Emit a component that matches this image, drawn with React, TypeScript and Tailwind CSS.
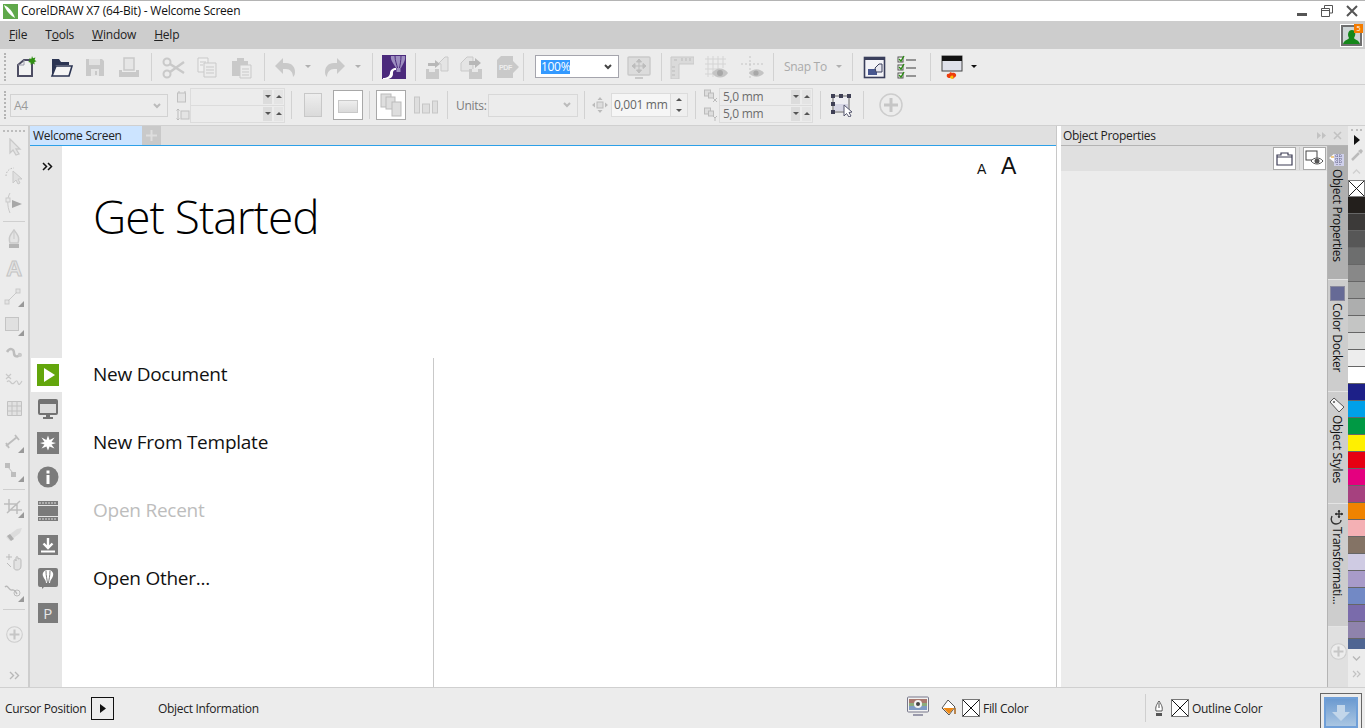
import type { ReactNode } from 'react';

const G = '#c9c9c9';
const D = '#4d4d63';

function Ico({ w = 24, h = 24, children }: { w?: number; h?: number; children: ReactNode }) {
  return (
    <svg width={w} height={h} viewBox={`0 0 ${w} ${h}`} fill="none" className="block shrink-0">
      {children}
    </svg>
  );
}

function Sep({ className }: { className: string }) {
  return <div className={`w-px h-[28px] shrink-0 bg-[#d2d2d2] ${className}`} />;
}

function Grip() {
  return <div className="ml-[4px] w-[3px] h-[28px] shrink-0 border-l-2 border-dotted border-[#b4b4b4]" />;
}

function Slot({ className, children }: { className: string; children?: ReactNode }) {
  return <div className={`flex items-center justify-center shrink-0 ${className}`}>{children}</div>;
}

function Caret({ color = '#b0b0b0' }: { color?: string }) {
  return <div className="w-0 h-0 border-x-[3.5px] border-x-transparent border-t-[3.5px]" style={{ borderTopColor: color }} />;
}

function Spin({ text, w }: { text?: string; w: string }) {
  return (
    <div className={`flex items-center h-[16px] ${w}`}>
      <span className="flex-1 pl-[3px] text-[12px] text-[#6d6d6d] leading-none">{text}</span>
      <span className="w-[9px] h-[14px] mr-[2px] bg-[#dcdcdc] flex items-center justify-center"><Caret color="#555" /></span>
      <span className="w-[9px] h-[14px] mr-[1px] bg-[#e4e4e4] flex items-center justify-center"><div className="w-0 h-0 border-x-[3.5px] border-x-transparent border-b-[3.5px] border-b-[#555]" /></span>
    </div>
  );
}

function Cross({ className }: { className: string }) {
  return (
    <div className={`shrink-0 ${className}`}>
      <svg viewBox="0 0 18 18" className="block w-full h-full">
        <rect x="0.5" y="0.5" width="17" height="17" fill="#fff" stroke="#777" />
        <path d="M1 1 17 17M17 1 1 17" stroke="#111" strokeWidth="1" />
      </svg>
    </div>
  );
}

function Toolbar1() {
  return (
    <div className="flex items-center h-[36px] bg-[#ececec] border-b border-[#d0d0d0]">
      <Grip />
      <Slot className="w-[36px]">
        <Ico>
          <path d="M5 10 11 5H19V21H5Z" fill="#f2f2f2" stroke={D} strokeWidth="2" />
          <path d="M5 10H11V5" stroke="#9a9aa8" />
          <path d="M19 1l1 2.2 2.4-.6-.8 2.3 2 1.4-2.3.8.4 2.4-2.2-1.2-1.7 1.7-.3-2.4-2.4-.5 1.9-1.5-1-2.2 2.4.4Z" fill="#2f8f12" />
        </Ico>
      </Slot>
      <Slot className="ml-[1px] w-[34px]">
        <Ico>
          <path d="M3 21V4H10L12 7H20V10H7L3 21Z" fill="#2c3553" />
          <path d="M3 21 7 11H23L20 21Z" fill="#f5f5f5" stroke="#2c3553" strokeWidth="1.6" />
        </Ico>
      </Slot>
      <Slot className="w-[34px]">
        <Ico>
          <path d="M3 4H19L21 6V21H3Z" fill={G} />
          <rect x="6" y="4" width="11" height="6" fill="#e2e2e2" />
          <rect x="8" y="14" width="8" height="7" fill="#e6e6e6" />
          <rect x="12" y="16" width="2" height="4" fill={G} />
        </Ico>
      </Slot>
      <Slot className="w-[34px]">
        <Ico>
          <rect x="7" y="3" width="10" height="12" fill="#e6e6e6" stroke={G} strokeWidth="1.5" />
          <path d="M2 15H5V17H19V15H22V22H2Z" fill={G} />
        </Ico>
      </Slot>
      <Sep className="ml-[5px]" />
      <Slot className="ml-[4px] w-[34px]">
        <Ico>
          <circle cx="6" cy="7" r="3.5" stroke={G} strokeWidth="2" />
          <circle cx="6" cy="19" r="3.5" stroke={G} strokeWidth="2" />
          <path d="M9 9 23 18M9 17 23 7" stroke={G} strokeWidth="2.4" />
        </Ico>
      </Slot>
      <Slot className="w-[34px]">
        <Ico>
          <path d="M3 3H13V17H3Z" fill="#f0f0f0" stroke={G} />
          <path d="M9 8H21V22H9Z" fill="#ececec" stroke={G} />
          <path d="M5 7H11M5 10H8M11 12H19M11 15H19M11 18H19" stroke={G} />
        </Ico>
      </Slot>
      <Slot className="w-[34px]">
        <Ico>
          <path d="M3 6H8V3H15V6H19V21H3Z" fill={G} />
          <path d="M11 10H22V23H11Z" fill="#ececec" stroke={G} />
          <path d="M13 14H20M13 17H20M13 20H20" stroke={G} />
        </Ico>
      </Slot>
      <Sep className="ml-[6px]" />
      <Slot className="ml-[5px] w-[30px]">
        <Ico>
          <path d="M2 11 10 3V8H13C19 8 22 12 22 17 22 20 21 21 20 22 20 17 17 14 13 14H10V19Z" fill={G} />
        </Ico>
      </Slot>
      <Slot className="w-[16px]"><Caret /></Slot>
      <Slot className="ml-[4px] w-[30px]">
        <Ico>
          <path d="M22 11 14 3V8H11C5 8 2 12 2 17 2 20 3 21 4 22 4 17 7 14 11 14H14V19Z" fill={G} />
        </Ico>
      </Slot>
      <Slot className="w-[16px]"><Caret /></Slot>
      <Sep className="ml-[6px]" />
      <Slot className="ml-[9px] w-[24px]">
        <Ico>
          <rect width="24" height="24" fill="#4b2a7c" />
          <path d="M9 1H23C24 5 21 9 19 13H14C12 9 8 5 9 1Z" fill="#9d8ec0" />
          <path d="M13 1C13 6 15 10 15.5 13M19 1C19 6 18 10 17.5 13" stroke="#4b2a7c" />
          <path d="M14.5 13H18.5V17H14.5Z" fill="#9d8ec0" />
          <path d="M1 23C5 23 8 21 8 18 8 15 11 13 14 13L14 15C11 15 11 17 11 19 11 22 8 24 5 24H1Z" fill="#fff" />
        </Ico>
      </Slot>
      <Sep className="ml-[9px]" />
      <Slot className="w-[42px]">
        <Ico>
          <path d="M1 14H14V24H1Z" fill={G} />
          <path d="M4 14H10V17H4Z" fill="#e8e8e8" />
          <path d="M3 8H10V5L15 9 10 13V11H3Z" fill="#b8b8b8" />
          <path d="M14 8 20 2H23V16H16V9Z" fill="#e4e4e4" stroke={G} />
        </Ico>
      </Slot>
      <Slot className="w-[26px]">
        <Ico>
          <path d="M2 8 8 2H14V16H2Z" fill="#e4e4e4" stroke={G} />
          <path d="M10 6H16V3L22 8 16 13V10H10Z" fill="#b8b8b8" />
          <path d="M10 14H23V24H10Z" fill={G} />
          <path d="M13 14H19V17H13Z" fill="#e8e8e8" />
        </Ico>
      </Slot>
      <Slot className="ml-[10px] w-[26px]">
        <Ico>
          <path d="M2 5 6 1H18V6L24 12 18 18V23H2Z" fill={G} />
          <text x="4" y="15" fontSize="7" fontWeight="700" fill="#eee" fontFamily="Liberation Sans, sans-serif">PDF</text>
        </Ico>
      </Slot>
      <Sep className="ml-[3px]" />
      <div className="ml-[11px] w-[84px] h-[23px] shrink-0 bg-white border border-[#a5a5ad] flex items-center pl-[5px]">
        <span className="bg-[#3399ff] text-white text-[12px] leading-[14px]">100%</span>
        <svg width="8" height="6" viewBox="0 0 8 6" className="ml-auto mr-[6px]"><path d="M1 1 4 4 7 1" stroke="#444" strokeWidth="2" fill="none" /></svg>
      </div>
      <Slot className="ml-[5px] w-[30px]">
        <Ico>
          <rect x="1" y="2" width="22" height="18" rx="1" fill="#dcdcdc" stroke={G} strokeWidth="1.4" />
          <path d="M12 5v12M6 11h12M12 4l-2.5 3h5ZM12 18l-2.5-3h5ZM5 11l3-2.5v5ZM19 11l-3-2.5v5Z" stroke="#bdbdbd" fill="#bdbdbd" />
          <path d="M8 23H16" stroke={G} strokeWidth="2" />
        </Ico>
      </Slot>
      <Sep className="ml-[7px]" />
      <Slot className="ml-[5px] w-[30px]">
        <Ico>
          <path d="M1 2H24V9H9V24H1Z" fill="#dadada" stroke={G} />
          <path d="M4 5H7M12 3V6M16 3V6M20 3V6M2 12H5M2 16H5M2 20H5" stroke="#bbb" />
        </Ico>
      </Slot>
      <Slot className="ml-[4px] w-[30px]">
        <Ico>
          <path d="M1 4H22M1 9H22M1 14H16M1 19H10M4 1V22M9 1V22M14 1V17M19 1V13" stroke="#d4d4d4" />
          <path d="M8 18C12 12 20 12 24 18 20 24 12 24 8 18Z" fill="#c4c4c4" />
          <circle cx="16" cy="18" r="3" fill="#a8a8a8" />
        </Ico>
      </Slot>
      <Slot className="ml-[6px] w-[30px]">
        <Ico>
          <path d="M1 9H24M10 1V24" stroke="#c4c4c4" strokeDasharray="2 2" />
          <path d="M9 18C13 13 20 13 24 18 20 23 13 23 9 18Z" fill="#c4c4c4" />
          <circle cx="16" cy="18" r="2.6" fill="#a8a8a8" />
        </Ico>
      </Slot>
      <Sep className="ml-[6px]" />
      <span className="ml-[10px] w-[44px] shrink-0 text-[12px] text-[#aaa] whitespace-nowrap">Snap To</span>
      <Slot className="ml-[5px] w-[12px]"><Caret /></Slot>
      <Sep className="ml-[7px]" />
      <Slot className="ml-[10px] w-[24px]">
        <Ico>
          <rect x="1.5" y="2.5" width="20" height="20" fill="#f4f4f8" stroke="#3a3f5c" strokeWidth="1.6" />
          <path d="M2 2H22V5H2Z" fill="#3a3f5c" />
          <path d="M5 14H14V20H5Z" fill="#48578f" />
          <path d="M12 13 16 9H19V17H13Z" fill="#e8e8f0" stroke="#3a3f5c" />
        </Ico>
      </Slot>
      <Slot className="ml-[8px] w-[24px]">
        <Ico>
          <rect x="3" y="2" width="5" height="5" fill="#fff" stroke="#555" />
          <rect x="3" y="10" width="5" height="5" fill="#fff" stroke="#555" />
          <rect x="3" y="18" width="5" height="5" fill="#fff" stroke="#555" />
          <path d="M4 4 6 6 9 1M4 12 6 14 9 9M4 20 6 22 9 17" stroke="#2b8a12" strokeWidth="1.4" />
          <path d="M11 5H21M11 13H21M11 21H21" stroke="#777" strokeWidth="1.5" />
        </Ico>
      </Slot>
      <Sep className="ml-[11px]" />
      <Slot className="ml-[9px] w-[24px]">
        <Ico>
          <rect x="2" y="1" width="20" height="15" fill="#dfe1ea" stroke="#444" />
          <rect x="2" y="1" width="20" height="5" fill="#111" />
          <path d="M7 22C6 19 8 18 9 19 10 17 11 17 12 18 14 17 17 19 16 21 15 23 14 22 13 24 12 22 9 24 7 22Z" fill="#ee3d0c" />
          <path d="M10 23C10 21 12 20 13 21 14 22 13 24 12 24Z" fill="#f9c30c" />
        </Ico>
      </Slot>
      <Slot className="ml-[5px] w-[10px]"><Caret color="#111" /></Slot>
    </div>
  );
}

function PlusCircle({ size }: { size: number }) {
  return (
    <svg width={size} height={size} viewBox="0 0 24 24" fill="none" className="block">
      <circle cx="12" cy="12" r="11" stroke="#cdcdcd" strokeWidth="1.5" fill="#ececec" />
      <path d="M12 5V19M5 12H19" stroke="#c6c6c6" strokeWidth="3" />
    </svg>
  );
}

function Toolbar2() {
  return (
    <div className="flex items-center h-[41px] bg-[#ececec] border-b border-[#d0d0d0]">
      <Grip />
      <div className="ml-[3px] w-[158px] h-[23px] shrink-0 bg-[#ececec] border border-[#d2d2d2] flex items-center pl-[3px] pt-[2px] text-[12px] text-[#9a9a9a]">
        A4
        <svg width="8" height="6" viewBox="0 0 8 6" className="ml-auto mr-[6px]"><path d="M1 1 4 4 7 1" stroke="#bbb" strokeWidth="2" fill="none" /></svg>
      </div>
      <div className="ml-[8px] w-[14px] shrink-0 flex flex-col gap-[5px]">
        <Ico w={12} h={13}>
          <path d="M3 1V3M9 1V3" stroke="#bbb" />
          <rect x="1.5" y="3" width="8" height="9" fill="#e4e4e4" stroke="#c0c0c0" />
        </Ico>
        <Ico w={14} h={13}>
          <path d="M2 1V12M0.5 2.5 2 1 3.5 2.5M0.5 10.5 2 12 3.5 10.5" stroke="#bbb" />
          <rect x="5" y="3" width="8" height="8" fill="#e4e4e4" stroke="#c0c0c0" />
        </Ico>
      </div>
      <div className="w-[95px] shrink-0 border border-[#dcdcdc] flex flex-col">
        <div className="border-b border-[#dcdcdc]"><Spin w="w-full" /></div>
        <Spin w="w-full" />
      </div>
      <Sep className="ml-[6px]" />
      <div className="ml-[12px] w-[18px] h-[24px] shrink-0 border border-[#c8c8c8] bg-gradient-to-b from-[#eeeeee] to-[#dadada]" />
      <div className="ml-[11px] w-[30px] h-[30px] shrink-0 bg-white border border-[#a8a8a8] flex items-center justify-center">
        <div className="w-[20px] h-[13px] mt-[3px] border border-[#c8c8c8] bg-gradient-to-b from-[#eeeeee] to-[#dadada]" />
      </div>
      <Sep className="ml-[6px]" />
      <div className="ml-[6px] w-[30px] h-[30px] shrink-0 bg-white border border-[#a8a8a8] flex items-center justify-center">
        <Ico>
          <rect x="2" y="1" width="10" height="13" fill="#dedede" stroke="#bbb" />
          <rect x="7" y="4" width="9" height="12" fill="#dedede" stroke="#bbb" />
          <rect x="13" y="9" width="9" height="14" fill="#dedede" stroke="#bbb" />
        </Ico>
      </div>
      <Slot className="ml-[7px] w-[26px]">
        <Ico w={26} h={18}>
          <rect x="1.5" y="1" width="5" height="16" fill="#dedede" stroke="#c6c6c6" />
          <rect x="9.5" y="8" width="7" height="9" fill="#dedede" stroke="#c6c6c6" />
          <rect x="19.5" y="5" width="5" height="12" fill="#dedede" stroke="#c6c6c6" />
        </Ico>
      </Slot>
      <Sep className="ml-[8px]" />
      <span className="ml-[8px] pt-[2px] w-[32px] shrink-0 text-[12px] text-[#7c7c7c]">Units:</span>
      <div className="w-[90px] h-[23px] shrink-0 border border-[#d8d8d8] flex items-center justify-end pr-[6px]">
        <svg width="8" height="6" viewBox="0 0 8 6"><path d="M1 1 4 4 7 1" stroke="#bbb" strokeWidth="2" fill="none" /></svg>
      </div>
      <Sep className="ml-[6px]" />
      <Slot className="ml-[7px] w-[16px]">
        <Ico w={16} h={16}>
          <rect x="5" y="5" width="6" height="6" fill="#ddd" stroke="#bbb" />
          <path d="M8 0 5.5 3H10.5ZM8 16 5.5 13H10.5ZM0 8 3 5.5V10.5ZM16 8 13 5.5V10.5Z" fill="#bbb" />
        </Ico>
      </Slot>
      <div className="ml-[3px] w-[77px] h-[24px] shrink-0 bg-[#f6f6f6] border border-[#dcdcdc] flex items-center">
        <span className="flex-1 pl-[2px] text-[12px] text-[#666] whitespace-nowrap">0,001 mm</span>
        <div className="w-[17px] h-full bg-[#efefef] border-l border-[#dcdcdc] flex flex-col items-center justify-around">
          <div className="w-0 h-0 border-x-[3.5px] border-x-transparent border-b-[3.5px] border-b-[#555]" />
          <Caret color="#555" />
        </div>
      </div>
      <Sep className="ml-[7px]" />
      <div className="ml-[8px] w-[14px] shrink-0 flex flex-col gap-[4px]">
        <Ico w={14} h={14}>
          <rect x="0.5" y="1" width="6" height="6" fill="#ddd" stroke="#bbb" />
          <rect x="4.5" y="4" width="5" height="5" fill="#ddd" stroke="#bbb" />
          <path d="M9 9 13 13M13 9 9 13" stroke="#bbb" />
        </Ico>
        <Ico w={14} h={14}>
          <rect x="0.5" y="1" width="6" height="6" fill="#ddd" stroke="#bbb" />
          <rect x="4.5" y="4" width="5" height="5" fill="#ddd" stroke="#bbb" />
          <path d="M9 9 11 11 13 9M11 11V14" stroke="#bbb" />
        </Ico>
      </div>
      <div className="ml-[1px] w-[94px] shrink-0 border border-[#dcdcdc] flex flex-col">
        <div className="border-b border-[#dcdcdc]"><Spin w="w-full" text="5,0 mm" /></div>
        <Spin w="w-full" text="5,0 mm" />
      </div>
      <Sep className="ml-[7px]" />
      <Slot className="ml-[9px] w-[24px]">
        <Ico>
          <rect x="3" y="3" width="16" height="16" fill="#eeeef2" stroke="#666" />
          <rect x="4" y="11" width="14" height="7" fill="#d6d6e4" />
          <path d="M1 1h4v4H1ZM17 1h4v4h-4ZM1 17h4v4H1ZM9 1h4v4H9ZM1 9h4v4H1Z" fill="#3f4055" />
          <path d="M14 12V23L16.5 20.5 19 24 21 23 19 19.5 22 19Z" fill="#fff" stroke="#54566e" />
        </Ico>
      </Slot>
      <Sep className="ml-[9px]" />
      <Slot className="ml-[15px] w-[24px]">
        <PlusCircle size={24} />
      </Slot>
    </div>
  );
}

function ToolSlot({ h, children }: { h: string; children: ReactNode }) {
  return <div className={`flex items-center justify-center shrink-0 ${h}`}>{children}</div>;
}

function ToolSep({ className }: { className: string }) {
  return <div className={`w-[22px] h-px mx-auto shrink-0 bg-[#cfcfcf] ${className}`} />;
}

function Toolbox() {
  return (
    <div className="w-[30px] shrink-0 bg-[#ececec] border-r-2 border-[#cdcdcd] flex flex-col">
      <div className="mt-[4px] mx-[3px] h-[2px] shrink-0 border-t-2 border-dotted border-[#bdbdbd]" />
      <div className="mt-[1px]" />
      <ToolSlot h="h-[28px]">
        <Ico w={18} h={18}><path d="M5 1V15L8 12 11 17 14 16 11 11H15Z" fill="#e4e4e4" stroke={G} strokeWidth="1.3" /></Ico>
      </ToolSlot>
      <ToolSlot h="h-[28px]">
        <Ico w={20} h={20}>
          <path d="M2 11C2 6 6 3 10 3" stroke="#bdbdbd" strokeDasharray="1.5 1.5" />
          <path d="M9 6V18L12 15 14 19 16 18 14 14H18Z" fill="#e0e0e0" stroke={G} />
        </Ico>
      </ToolSlot>
      <ToolSlot h="h-[28px]">
        <Ico w={20} h={22}>
          <path d="M6 1C3 6 3 14 6 21" stroke={G} />
          <rect x="2" y="6" width="4" height="4" fill="#e8e8e8" stroke={G} />
          <path d="M8 8 18 12 8 16Z" fill="#a8a8a8" />
        </Ico>
      </ToolSlot>
      <ToolSep className="mt-[4px]" />
      <ToolSlot h="h-[34px]">
        <Ico w={18} h={20}>
          <path d="M9 1C12 5 15 8 13 14H5C3 8 6 5 9 1Z" fill="#e4e4e4" stroke={G} strokeWidth="1.5" />
          <path d="M9 3V10" stroke={G} />
          <rect x="4" y="15" width="10" height="4" fill="#b4b4b4" />
        </Ico>
      </ToolSlot>
      <ToolSlot h="h-[25px]">
        <span className="text-[22px] font-bold text-[#e4e4e4] leading-none [-webkit-text-stroke:1px_#c4c4c4] font-['Liberation_Sans',sans-serif]">A</span>
      </ToolSlot>
      <ToolSlot h="h-[31px]">
        <Ico w={20} h={20}>
          <rect x="1" y="13" width="4" height="4" fill="#e4e4e4" stroke={G} />
          <rect x="12" y="2" width="4" height="4" fill="#e4e4e4" stroke={G} />
          <path d="M4 14 13 5" stroke={G} />
          <path d="M20 14V20H14Z" fill="#999" />
        </Ico>
      </ToolSlot>
      <ToolSlot h="h-[27px]">
        <Ico w={20} h={20}>
          <rect x="1.5" y="1.5" width="13" height="13" fill="#e0e0e0" stroke="#c4c4c4" />
          <path d="M20 14V20H14Z" fill="#999" />
        </Ico>
      </ToolSlot>
      <ToolSlot h="h-[27px]">
        <Ico w={18} h={14}><path d="M2 6C5 1 9 3 9 7 9 11 14 12 15 7" stroke="#bdbdbd" strokeWidth="2.5" /><circle cx="15" cy="9" r="2" fill={G} /></Ico>
      </ToolSlot>
      <ToolSlot h="h-[27px]">
        <Ico w={18} h={16}><path d="M1 2 6 7M6 2 1 7M2 10C5 6 6 14 9 11S12 8 13 11 15 12 17 9" stroke={G} strokeWidth="1.2" /></Ico>
      </ToolSlot>
      <ToolSlot h="h-[30px]">
        <Ico w={15} h={15}><path d="M.5.5H14.5V14.5H.5ZM5 .5V14.5M10 .5V14.5M.5 5H14.5M.5 10H14.5" fill="#e2e2e2" stroke="#c2c2c2" /></Ico>
      </ToolSlot>
      <div className="mt-[5px]" />
      <ToolSlot h="h-[30px]">
        <Ico w={20} h={20}>
          <path d="M2 13 13 4M2 10 5 15M11 2 15 7" stroke="#bdbdbd" strokeWidth="1.8" />
          <path d="M20 14V20H14Z" fill="#999" />
        </Ico>
      </ToolSlot>
      <ToolSlot h="h-[28px]">
        <Ico w={20} h={20}>
          <rect x="1" y="1" width="5" height="5" fill="#bdbdbd" />
          <rect x="7" y="10" width="5" height="5" fill="#bdbdbd" />
          <path d="M4 5 9 11" stroke="#bdbdbd" />
          <path d="M20 14V20H14Z" fill="#999" />
        </Ico>
      </ToolSlot>
      <ToolSep className="mt-[3px]" />
      <ToolSlot h="h-[36px]">
        <Ico w={20} h={20}>
          <path d="M0 6H13V16M5 1V12H18M3 15 16 3" stroke="#bdbdbd" strokeWidth="1.5" />
          <path d="M20 14V20H14Z" fill="#999" />
        </Ico>
      </ToolSlot>
      <ToolSlot h="h-[18px]">
        <Ico w={18} h={16}><path d="M1 10 12 2 17 1 15 6 5 14Z" fill="#dcdcdc" /><path d="M2 9 6 14 9 12 5 7Z" fill="#b0b0b0" /></Ico>
      </ToolSlot>
      <ToolSlot h="h-[36px]">
        <Ico w={18} h={18}><path d="M9 15V8C9 6 11 6 11 8V5C11 3 13 3 13 5V6C15 5 16 6 16 7V13C16 16 14 17 12 17 10 17 9 16 9 15Z" fill="#e2e2e2" stroke="#bbb" /><path d="M1 4H7M4 1V7M2 10 6 14" stroke="#bbb" /></Ico>
      </ToolSlot>
      <ToolSlot h="h-[24px]">
        <Ico w={20} h={20}>
          <path d="M1 5C4 2 5 9 8 8S11 9 13 12" stroke="#b8b8b8" strokeWidth="1.4" />
          <circle cx="13" cy="11" r="3" stroke="#bbb" />
          <path d="M20 14V20H14Z" fill="#999" />
        </Ico>
      </ToolSlot>
      <ToolSep className="mt-[5px]" />
      <ToolSlot h="h-[48px]"><PlusCircle size={17} /></ToolSlot>
      <ToolSlot h="h-[34px]">
        <svg width="11" height="9" viewBox="0 0 11 9" fill="none"><path d="M1 1 4.5 4.5 1 8M6 1 9.5 4.5 6 8" stroke="#b8b8b8" strokeWidth="1.4" /></svg>
      </ToolSlot>
    </div>
  );
}

function WelcomeRail() {
  const cell = 'h-[34px] pl-[3px] flex items-center justify-center shrink-0';
  return (
    <div className="w-[32px] shrink-0 bg-[#e6e6e6] flex flex-col">
      <div className="h-[40px] pl-[2px] flex items-center justify-center shrink-0">
        <svg width="11" height="9" viewBox="0 0 11 9" fill="none"><path d="M1 1 4.5 4.5 1 8M6 1 9.5 4.5 6 8" stroke="#111" strokeWidth="1.5" /></svg>
      </div>
      <div className="h-[172px] shrink-0" />
      <div className={`${cell} bg-white ml-[1px]`}>
        <svg width="22" height="22" viewBox="0 0 22 22" className="block"><rect width="22" height="22" fill="#63a60c" /><path d="M7 4V18L18 11Z" fill="#fff" /></svg>
      </div>
      <div className={cell}>
        <svg width="20" height="21" viewBox="0 0 20 21" fill="none" className="block">
          <rect x="1" y="1" width="18" height="14" rx="1" fill="#dcdcdc" stroke="#727272" strokeWidth="2" />
          <rect x="1" y="1" width="18" height="4" fill="#727272" />
          <path d="M8 15H12V18H8ZM5 18H15V20H5Z" fill="#727272" />
        </svg>
      </div>
      <div className={cell}>
        <svg width="22" height="22" viewBox="0 0 22 22" className="block"><rect width="22" height="22" fill="#7b7b7b" /><path d="M11 3.5 12.6 8 17.5 5.5 14.5 10 19 11 14.5 12.5 17.5 16.500 12.600 14.500 11 18.500 9.400 14.500 4.500 16.500 7.500 12.500 3 11 7.500 10 4.500 5.500 9.400 8Z" fill="#fff" /></svg>
      </div>
      <div className={cell}>
        <svg width="22" height="22" viewBox="0 0 22 22" className="block"><circle cx="11" cy="11" r="10.5" fill="#7b7b7b" /><rect x="9.5" y="4.5" width="3" height="3" fill="#fff" /><rect x="9.5" y="9" width="3" height="9" fill="#fff" /></svg>
      </div>
      <div className={cell}>
        <svg width="20" height="20" viewBox="0 0 20 20" className="block">
          <rect width="20" height="20" fill="#7b7b7b" />
          <path d="M1 2H19M1 18H19" stroke="#ddd" strokeDasharray="2 1" strokeWidth="1.2" />
          <path d="M0 4.5H20M0 15.5H20" stroke="#e6e6e6" />
        </svg>
      </div>
      <div className={cell}>
        <svg width="20" height="20" viewBox="0 0 20 20" className="block"><rect width="20" height="20" fill="#7b7b7b" /><path d="M10 3V12M5.5 8.5 10 13 14.5 8.5" stroke="#fff" strokeWidth="2.4" fill="none" /><path d="M3 16.5H17" stroke="#fff" strokeWidth="2" /></svg>
      </div>
      <div className={cell}>
        <svg width="20" height="22" viewBox="0 0 20 22" className="block">
          <path d="M2 0H18A2 2 0 0 1 20 2V17A2 2 0 0 1 18 19H6L4 21V19H2A2 2 0 0 1 0 17V2A2 2 0 0 1 2 0Z" fill="#7b7b7b" />
          <path d="M10 2C14 2 16 5 15 8 14 11 12 12 12 15H8C8 12 6 11 5 8 4 5 6 2 10 2Z" fill="#fff" />
          <path d="M8 3C8 8 9 11 9.5 15M12 3C12 8 11 11 10.5 15" stroke="#7b7b7b" fill="none" />
        </svg>
      </div>
      <div className={cell}>
        <div className="w-[20px] h-[20px] bg-[#7b7b7b] text-[#e6e6e6] text-[15px] leading-[20px] text-center">P</div>
      </div>
    </div>
  );
}

function WelcomePage() {
  return (
    <div className="flex-1 bg-white relative flex flex-col min-w-0">
      <div className="absolute top-[7px] right-[40px] flex items-baseline gap-[15px] text-[#111] font-['Liberation_Sans',sans-serif]">
        <span className="text-[14px] font-medium">A</span>
        <span className="text-[23px] leading-[27px]">A</span>
      </div>
      <h1 className="ml-[31px] mt-[35px] h-[177px] shrink-0 text-[46px] leading-[70px] font-light text-black whitespace-nowrap tracking-[-1px]">Get Started</h1>
      <div className="flex flex-1">
        <div className="w-[372px] h-full border-r border-[#c9c9c9] pl-[31px] flex flex-col gap-[40px] pt-[2px] text-[19px] leading-[28px] tracking-[-0.25px] text-[#111] shrink-0">
          <div className="h-[28px]">New Document</div>
          <div className="h-[28px]">New From Template</div>
          <div className="h-[28px] text-[#bdbdbd]">Open Recent</div>
          <div className="h-[28px]">Open Other...</div>
        </div>
      </div>
    </div>
  );
}

function DocTabs() {
  return (
    <div className="flex-1 flex flex-col min-w-0 border-r border-[#c8c8c8]">
      <div className="h-[20px] shrink-0 bg-[#e0e0e0] border-b border-[#2da0e8] flex">
        <div className="w-[112px] h-[19px] bg-[#cce4ff] pl-[3px] text-[12px] leading-[19px] text-[#222] whitespace-nowrap">Welcome Screen</div>
        <div className="w-[19px] h-[19px] bg-[#c9c9c9] flex items-center justify-center">
          <svg width="11" height="11" viewBox="0 0 11 11"><path d="M5.5 0V11M0 5.5H11" stroke="#dedede" strokeWidth="2" /></svg>
        </div>
      </div>
      <div className="flex-1 flex min-h-0">
        <WelcomeRail />
        <WelcomePage />
      </div>
    </div>
  );
}

function SideTab({ label, className, icon }: { label: string; className: string; icon: ReactNode }) {
  return (
    <div className={`shrink-0 flex flex-col items-center pt-[3px] pr-[2px] border-b border-[#e4e4e4] ${className}`}>
      <div className="h-[20px] flex items-center justify-center shrink-0">{icon}</div>
      <span className="[writing-mode:vertical-rl] text-[12px] leading-[16px] text-[#111] whitespace-nowrap">{label}</span>
    </div>
  );
}

function PropertiesDock() {
  return (
    <div className="w-[291px] shrink-0 flex bg-white">
      <div className="w-[4px] shrink-0" />
      <div className="flex-1 flex flex-col min-w-0 bg-[#ececec]">
        <div className="h-[20px] shrink-0 bg-[#e0e0e0] border-b border-[#b4b4b4] flex items-center pl-[2px] text-[12px] text-[#222]">
          <span>Object Properties</span>
          <svg width="9" height="7" viewBox="0 0 9 7" className="ml-auto"><path d="M0 0 4 3.5 0 7ZM5 0 9 3.5 5 7Z" fill="#c2c2c2" /></svg>
          <svg width="9" height="9" viewBox="0 0 9 9" className="ml-[7px] mr-[6px]"><path d="M1 1 8 8M8 1 1 8" stroke="#c2c2c2" strokeWidth="1.6" /></svg>
        </div>
        <div className="flex-1 flex min-h-0">
          <div className="flex-1 flex flex-col min-w-0">
            <div className="h-[25px] shrink-0 bg-[#e0e0e0] flex items-center justify-end pr-[1px]">
              <div className="w-[23px] h-[23px] bg-white border border-[#aaa] flex items-center justify-center">
                <svg width="17" height="14" viewBox="0 0 17 14" fill="none"><path d="M1 3H5V1H12V3H16V13H1ZM1 5H16" stroke="#3d3d55" strokeWidth="1.2" /></svg>
              </div>
              <div className="w-px h-[23px] ml-[3px] bg-[#cfcfcf]" />
              <div className="w-[23px] h-[23px] ml-[3px] bg-white border border-[#aaa] flex items-center justify-center">
                <svg width="19" height="17" viewBox="0 0 19 17" fill="none"><rect x="1" y="1" width="11" height="9" stroke="#444" /><path d="M6 11C9 7 15 7 18 11 15 15 9 15 6 11Z" fill="#fff" stroke="#555" /><circle cx="12" cy="11" r="2.5" fill="#555" /></svg>
              </div>
            </div>
          </div>
          <div className="w-[21px] shrink-0 flex flex-col bg-[#e0e0e0] border-l border-[#b4b4b4]">
            <SideTab
              label="Object Properties"
              className="h-[134px] bg-[#b0b0b0]"
              icon={
                <svg width="16" height="16" viewBox="0 0 16 16"><path d="M5 3H15V15H5Z" fill="#cfd0ea" /><path d="M6 5H14M6 8H14M6 11H14M8 3V15M11 3V15" stroke="#6a6a90" strokeDasharray="1 1" /><path d="M0 7 5 3V11Z" fill="#fff" /><path d="M2 6H5" stroke="#e59a12" /></svg>
              }
            />
            <SideTab
              label="Color Docker"
              className="h-[112px] bg-[#cdcdcd]"
              icon={<div className="w-[15px] h-[15px] bg-[#666a96] border border-[#8a8a9e]" />}
            />
            <SideTab
              label="Object Styles"
              className="h-[112px] bg-[#cdcdcd]"
              icon={
                <svg width="16" height="16" viewBox="0 0 16 16"><path d="M1 5 5 1 15 10 10 15Z" fill="#f4f4f4" stroke="#555" /><circle cx="5" cy="5" r="1" fill="#555" /></svg>
              }
            />
            <SideTab
              label="Transformati..."
              className="h-[123px] bg-[#cdcdcd]"
              icon={
                <svg width="16" height="16" viewBox="0 0 16 16" fill="none"><path d="M10 1V9M6 5H14" stroke="#333" strokeWidth="1.4" /><path d="M10 1 8.5 3H11.5ZM10 9 8.5 7H11.5ZM14 5 12 3.5V6.5ZM6 5 8 3.5V6.5Z" fill="#333" /><path d="M3 7C1 11 3 15 7 15 10 15 12 13 12 11" stroke="#333" strokeWidth="1.4" /></svg>
              }
            />
            <div className="flex-1 flex items-start justify-center pt-[16px]"><PlusCircle size={17} /></div>
          </div>
        </div>
      </div>
    </div>
  );
}

const SWATCHES = [
  'bg-[#231f1c]', 'bg-[#3c3a39]', 'bg-[#575757]', 'bg-[#6d6e6e]', 'bg-[#888888]', 'bg-[#9b9c9b]',
  'bg-[#adaeae]', 'bg-[#c4c5c4]', 'bg-[#d9dad9]', 'bg-[#ededed]', 'bg-[#ffffff]', 'bg-[#1d2088]',
  'bg-[#00a0e9]', 'bg-[#009944]', 'bg-[#fff000]', 'bg-[#e60012]', 'bg-[#e4007f]', 'bg-[#a6417f]',
  'bg-[#f08300]', 'bg-[#f4b0b4]', 'bg-[#847365]', 'bg-[#cfcbe3]', 'bg-[#a89bc9]', 'bg-[#7289c5]',
  'bg-[#7a6bab]', 'bg-[#8f83ac]', 'bg-[#4f6592]',
];

function Palette() {
  return (
    <div className="w-[17px] shrink-0 bg-[#ececec] flex flex-col items-center">
      <div className="mt-[3px] w-[11px] h-[2px] border-t-2 border-dotted border-[#bdbdbd] shrink-0" />
      <div className="h-[14px] mt-[2px] flex items-center justify-center shrink-0">
        <svg width="6" height="10" viewBox="0 0 6 10"><path d="M0 0 6 5 0 10Z" fill="#111" /></svg>
      </div>
      <div className="h-[15px] flex items-center justify-center shrink-0">
        <svg width="14" height="14" viewBox="0 0 14 14" fill="none"><path d="M2 12 9 5" stroke="#bbb" strokeWidth="2.5" /><path d="M8 3 11 1 13 3 11 6Z" fill="#bbb" /></svg>
      </div>
      <div className="h-[18px] flex items-center justify-center shrink-0">
        <svg width="9" height="5" viewBox="0 0 9 5" fill="none"><path d="M1 4.5 4.5 1 8 4.5" stroke="#d0d0d0" strokeWidth="1.4" /></svg>
      </div>
      <Cross className="w-[17px] h-[17px]" />
      <div className="w-full h-[452px] overflow-hidden shrink-0">
        {SWATCHES.map((c) => (
          <div key={c} className={`h-[17px] border-b border-[#666] ${c}`} />
        ))}
      </div>
      <div className="h-[17px] mt-[1px] flex items-center justify-center shrink-0">
        <svg width="9" height="5" viewBox="0 0 9 5" fill="none"><path d="M1 .5 4.5 4 8 .5" stroke="#b8b8b8" strokeWidth="1.4" /></svg>
      </div>
      <div className="h-[13px] flex items-center justify-center shrink-0">
        <svg width="9" height="8" viewBox="0 0 9 8" fill="none"><path d="M1 1 4 4 1 7M5 1 8 4 5 7" stroke="#c2c2c2" strokeWidth="1.2" /></svg>
      </div>
    </div>
  );
}

function StatusBar() {
  return (
    <div className="h-[41px] shrink-0 bg-[#ececec] border-t border-[#d0d0d0] flex items-center text-[12px] text-[#222]">
      <span className="ml-[5px] pt-[2px] w-[86px] shrink-0 whitespace-nowrap">Cursor Position</span>
      <div className="w-[23px] h-[23px] shrink-0 border border-[#111] flex items-center justify-center">
        <svg width="6" height="9" viewBox="0 0 6 9"><path d="M0 0 6 4.5 0 9Z" fill="#111" /></svg>
      </div>
      <span className="ml-[44px] pt-[2px] whitespace-nowrap">Object Information</span>
      <div className="ml-auto flex items-center">
        <svg width="22" height="22" viewBox="0 0 22 22" className="block shrink-0 mb-[2px]">
          <rect x="0.5" y="1" width="21" height="15" rx="1" fill="#f2f2f2" stroke="#77778a" />
          <path d="M2 3H20V7H2Z" fill="#a9786e" /><path d="M2 7H20V10H2Z" fill="#8bab7c" /><path d="M2 10H20V14H2Z" fill="#7f9bc4" />
          <circle cx="11" cy="8" r="4" fill="#f2f2f2" /><circle cx="11" cy="8" r="2" fill="#444" />
          <path d="M6 19H16" stroke="#9a9aac" strokeWidth="2" />
        </svg>
        <svg width="16" height="18" viewBox="0 0 16 18" className="block shrink-0 ml-[12px]">
          <path d="M7 1 14 8 8 16 1 9Z" fill="#fff" stroke="#555" />
          <path d="M2 9H13L8 15Z" fill="#ef8a16" />
          <path d="M14 9V15" stroke="#a9651d" strokeWidth="1.5" />
        </svg>
        <Cross className="ml-[5px] w-[18px] h-[18px]" />
        <span className="ml-[3px] pt-[2px] w-[162px] shrink-0 whitespace-nowrap">Fill Color</span>
        <div className="w-px h-[28px] bg-[#cfcfcf] shrink-0" />
        <svg width="10" height="17" viewBox="0 0 10 17" fill="none" className="block shrink-0 ml-[8px]">
          <path d="M5 1C7 4 9 7 8 11H2C1 7 3 4 5 1Z" fill="#fff" stroke="#555" />
          <path d="M5 3V8" stroke="#555" /><rect x="2" y="13" width="6" height="3" fill="#555" />
        </svg>
        <Cross className="ml-[7px] w-[18px] h-[18px]" />
        <span className="ml-[3px] pt-[2px] w-[128px] shrink-0 whitespace-nowrap">Outline Color</span>
        <div className="w-[42px] h-[35px] mr-[3px] mt-[5px] shrink-0 border border-[#666] border-b-0 p-[3px] pb-0">
          <div className="w-full h-full border-2 border-[#6f9fd8] bg-gradient-to-b from-[#6b9ad0] to-[#aac6e2] flex items-center justify-center">
            <svg width="20" height="18" viewBox="0 0 20 18"><path d="M6 1H14V8H19L10 17 1 8H6Z" fill="#c2d6ea" /></svg>
          </div>
        </div>
      </div>
    </div>
  );
}

export default function App() {
  return (
    <div className="h-screen flex flex-col overflow-hidden bg-[#ececec] tracking-[-0.3px] font-['Open_Sans',sans-serif]">
      {/* title bar */}
      <div className="h-[21px] shrink-0 bg-white border-t border-[#b4b4b4] flex items-center">
        <svg width="15" height="15" viewBox="0 0 15 15" className="ml-[3px] shrink-0">
          <rect width="15" height="15" fill="#5fa84a" />
          <path d="M1 1C6 3 10 8 12 14 8 12 3 7 1 1Z" fill="#fff" />
        </svg>
        <span className="ml-[3px] text-[12px] tracking-[-0.2px] text-[#111] whitespace-nowrap">CorelDRAW X7 (64-Bit) - Welcome Screen</span>
        <div className="ml-auto flex items-center">
          <div className="w-[10px] h-[3px] mt-[6px] bg-[#555]" />
          <svg width="12" height="12" viewBox="0 0 12 12" fill="none" className="ml-[14px]"><path d="M3.5 3V.5H11.5V8H8.5M.5 3.5H8.5V11.5H.5ZM.5 5.5H8.5" stroke="#555" /></svg>
          <svg width="12" height="12" viewBox="0 0 12 12" fill="none" className="ml-[13px] mr-[7px]"><path d="M1 1 11 11M11 1 1 11" stroke="#555" strokeWidth="2" /></svg>
        </div>
      </div>
      {/* menu bar */}
      <div className="h-[28px] shrink-0 bg-[#cdcdcd] flex items-center text-[12px] tracking-[-0.2px] text-[#222]">
        <span className="ml-[9px]"><u>F</u>ile</span>
        <span className="ml-[18px]">T<u>o</u>ols</span>
        <span className="ml-[18px]"><u>W</u>indow</span>
        <span className="ml-[18px]"><u>H</u>elp</span>
        <div className="ml-auto mr-[2px] w-[23px] h-[23px] bg-white p-[1px] relative">
          <svg viewBox="0 0 21 21" className="block w-full h-full">
            <rect width="21" height="21" fill="#6f6f6f" />
            <rect x="2" y="2" width="17" height="17" fill="#cfd6d6" />
            <path d="M2 19C3 15 7 15 8 13 6 10 7 5 11 5 15 5 15 10 13 13 14 15 18 15 19 19Z" fill="#15871a" />
          </svg>
          <div className="absolute top-0 right-0 w-[9px] h-[9px] bg-[#f57c00] text-white text-[7px] leading-[9px] text-center">5</div>
        </div>
      </div>
      <Toolbar1 />
      <Toolbar2 />
      {/* work area */}
      <div className="flex-1 flex min-h-0">
        <Toolbox />
        <DocTabs />
        <PropertiesDock />
        <Palette />
      </div>
      <StatusBar />
    </div>
  );
}
